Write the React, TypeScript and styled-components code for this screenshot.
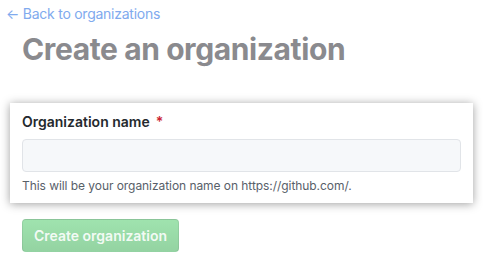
import React from "react";
import styled, { createGlobalStyle } from "styled-components";

const GlobalStyle = createGlobalStyle`
  body {
    margin: 0;
    background: #ffffff;
    font-family: Inter, "Liberation Sans", Arial, sans-serif;
  }
`;

const Page = styled.main`
  display: flex;
  flex-direction: column;
  align-items: flex-start;
  padding-top: 4px;
`;

const BackLink = styled.a`
  margin-left: 6px;
  font-size: 14px;
  line-height: 20px;
  letter-spacing: -0.25px;
  color: #80aaee;
  text-decoration: none;
`;

const Title = styled.h1`
  margin: 7px 0 0 22px;
  font-size: 30px;
  line-height: 37.5px;
  font-weight: 700;
  letter-spacing: -0.4px;
  color: #8a8a8e;
`;

const Card = styled.section`
  box-sizing: border-box;
  width: 463px;
  margin: 34px 0 0 10px;
  padding: 9px 12px 8px;
  background: #ffffff;
  box-shadow: 0 1px 9px rgba(0, 0, 0, 0.38);
  display: flex;
  flex-direction: column;
`;

const Label = styled.label`
  font-size: 14px;
  line-height: 20px;
  font-weight: 600;
  color: #24292e;
`;

const Required = styled.span`
  color: #cb2431;
  margin-left: 6px;
`;

const NameInput = styled.input`
  box-sizing: border-box;
  width: 439px;
  height: 33px;
  margin-top: 7px;
  border: 1px solid #e1e4e8;
  border-radius: 4px;
  background: #f6f8fa;
  outline: none;
`;

const Note = styled.p`
  margin: 5px 0 0;
  font-size: 12px;
  line-height: 18px;
  letter-spacing: -0.06px;
  color: #586069;
`;

const SubmitButton = styled.button`
  box-sizing: border-box;
  margin: 16px 0 0 22px;
  width: 157px;
  height: 33px;
  border: 1px solid rgba(27, 31, 35, 0.08);
  border-radius: 4px;
  background: linear-gradient(#9fe3ae, #94d3a2);
  color: rgba(255, 255, 255, 0.9);
  font-family: inherit;
  font-size: 14px;
  font-weight: 600;
`;

export default function App() {
  return (
    <>
      <GlobalStyle />
      <Page>
        <BackLink href="#">← Back to organizations</BackLink>
        <Title>Create an organization</Title>
        <Card>
          <Label>
            Organization name<Required>*</Required>
          </Label>
          <NameInput type="text" />
          <Note>This will be your organization name on https://github.com/.</Note>
        </Card>
        <SubmitButton disabled>Create organization</SubmitButton>
      </Page>
    </>
  );
}
